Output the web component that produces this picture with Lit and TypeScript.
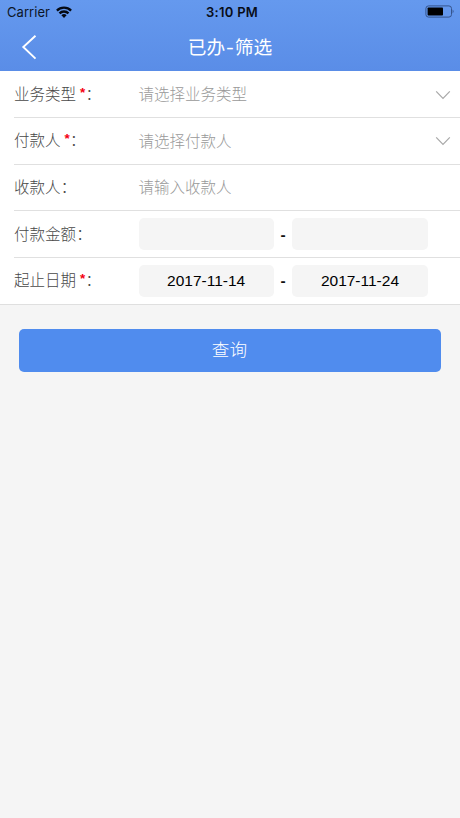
import { LitElement, html, css, svg, nothing } from "lit";
import { customElement, property } from "lit/decorators.js";

const FONT = css`"Liberation Sans", "Noto Sans CJK SC", sans-serif`;

@customElement("status-bar")
class StatusBar extends LitElement {
  static styles = css`
    :host {
      display: grid;
      grid-template-columns: 1fr auto 1fr;
      align-items: center;
      height: 23px;
      padding: 1px 5px 0 7px;
      box-sizing: border-box;
      font: 13px/22px Inter, sans-serif;
      color: #0c1526;
    }
    .left { display: flex; align-items: center; gap: 6px; }
    .carrier { letter-spacing: 0.05px; }
    .time { font-weight: 600; letter-spacing: 0.3px; color: #080d18; padding-left: 2px; }
    .right { display: flex; justify-content: flex-end; }
    svg { display: block; margin-top: -1px; }
  `;
  render() {
    return html`
      <div class="left">
        <span class="carrier">Carrier</span>
        <svg width="16" height="12" viewBox="0 0 16 12">
          <g fill="none" stroke="#050a14" stroke-width="2.3">
            <path d="M0.9 4.6A10 10 0 0 1 15.1 4.6" />
            <path d="M3.5 7.4A6.3 6.3 0 0 1 12.5 7.4" />
          </g>
          <path fill="#050a14" d="M5.4 9.3A3.6 3.6 0 0 1 10.6 9.3L8 11.9Z" />
        </svg>
      </div>
      <div class="time">3:10 PM</div>
      <div class="right">
        <svg width="30" height="13" viewBox="0 0 30 13">
          <rect x="0.9" y="0.9" width="25.6" height="11.2" rx="2.6" fill="none" stroke="#35548c" stroke-width="1" />
          <rect x="2.6" y="2.5" width="15.4" height="8" rx="0.8" fill="#000" />
          <path d="M27.6 4.6Q29.6 6.5 27.6 8.4Z" fill="#35548c" />
        </svg>
      </div>
    `;
  }
}

@customElement("form-row")
class FormRow extends LitElement {
  @property() label = "";
  @property({ type: Boolean }) required = false;
  @property({ type: Boolean }) select = false;

  static styles = css`
    :host {
      display: flex;
      align-items: center;
      box-sizing: border-box;
      height: 46.65px;
      margin-left: 14px;
      padding-right: 9px;
      border-bottom: 1px solid #e0e0e0;
      font: 300 15.5px/24px ${FONT};
      color: #484848;
    }
    :host(:last-of-type) { height: 46px; border-bottom-color: transparent; }
    .label { display: flex; width: 124.6px; white-space: pre; padding-top: 1px; }
    .star { width: 5.4px; margin: -2px 0 2px 4px; color: #f50012; font-weight: 700; font-size: 13.5px; }
    .colon { margin-left: 0.2px; }
    .value { flex: 1; display: flex; align-items: center; }
    svg { display: block; margin-top: 1px; }
  `;
  render() {
    return html`
      <div class="label">
        <span>${this.label}</span>${this.required ? html`<span class="star">*</span>` : nothing}<span class="colon">：</span>
      </div>
      <div class="value"><slot></slot></div>
      ${this.select
        ? html`<svg width="16" height="10" viewBox="0 0 16 10">
            ${svg`<path d="M1.2 1.3L8 8.3L14.8 1.3" fill="none" stroke="#a8a8a8" stroke-width="1.2"/>`}
          </svg>`
        : nothing}
    `;
  }
}

@customElement("app-root")
class AppRoot extends LitElement {
  static styles = css`
    :host {
      display: block;
      height: 818px;
      overflow: hidden;
      background: #f5f5f5;
      font-family: ${FONT};
    }
    .top { height: 71.4px; background: linear-gradient(#6599ee, #5a8de7); }
    .nav {
      display: grid;
      grid-template-columns: 58px 1fr 58px;
      align-items: center;
      height: 48px;
      color: #fff;
    }
    .nav svg { display: block; margin-left: 21px; }
    .title { text-align: center; font-size: 18.7px; line-height: 28px; padding-top: 2px; }
    .hyphen { display: inline-block; width: 9.6px; text-align: center; transform: scaleX(1.25); }
    .form { background: #fff; border-bottom: 1px solid #dfdfdf; }
    .hint { color: #999; padding-top: 2px; }
    .box {
      width: 135.2px;
      height: 32px;
      margin-top: 0.4px;
      border-radius: 5px;
      background: #f5f5f5;
      color: #000;
      font: 15.5px/32px ${FONT};
      text-align: center;
    }
    .dash { width: 18.6px; text-align: center; color: #111; font-weight: 700; padding-top: 1px; }
    .query {
      display: block;
      width: 422.4px;
      height: 42.6px;
      margin: 24.4px 0 0 18.7px;
      padding: 0 1px 1px 0;
      border: 0;
      border-radius: 5px;
      background: #508cee;
      color: #fff;
      font: 300 17.6px/41px ${FONT};
    }
  `;

  range(from = "", to = "") {
    return html`
      <div class="box">${from}</div>
      <div class="dash">-</div>
      <div class="box">${to}</div>
    `;
  }

  render() {
    return html`
      <div class="top">
        <status-bar></status-bar>
        <div class="nav">
          <svg width="16" height="26" viewBox="0 0 16 26">
            <path d="M14.5 1.8L2.3 13L14.5 24.6" fill="none" stroke="#fff" stroke-width="1.9" />
          </svg>
          <div class="title">已办<span class="hyphen">-</span>筛选</div>
        </div>
      </div>
      <div class="form">
        <form-row label="业务类型" required select><span class="hint">请选择业务类型</span></form-row>
        <form-row label="付款人" required select><span class="hint">请选择付款人</span></form-row>
        <form-row label="收款人"><span class="hint">请输入收款人</span></form-row>
        <form-row label="付款金额">${this.range()}</form-row>
        <form-row label="起止日期" required>${this.range("2017-11-14", "2017-11-24")}</form-row>
      </div>
      <button class="query">查询</button>
    `;
  }
}
